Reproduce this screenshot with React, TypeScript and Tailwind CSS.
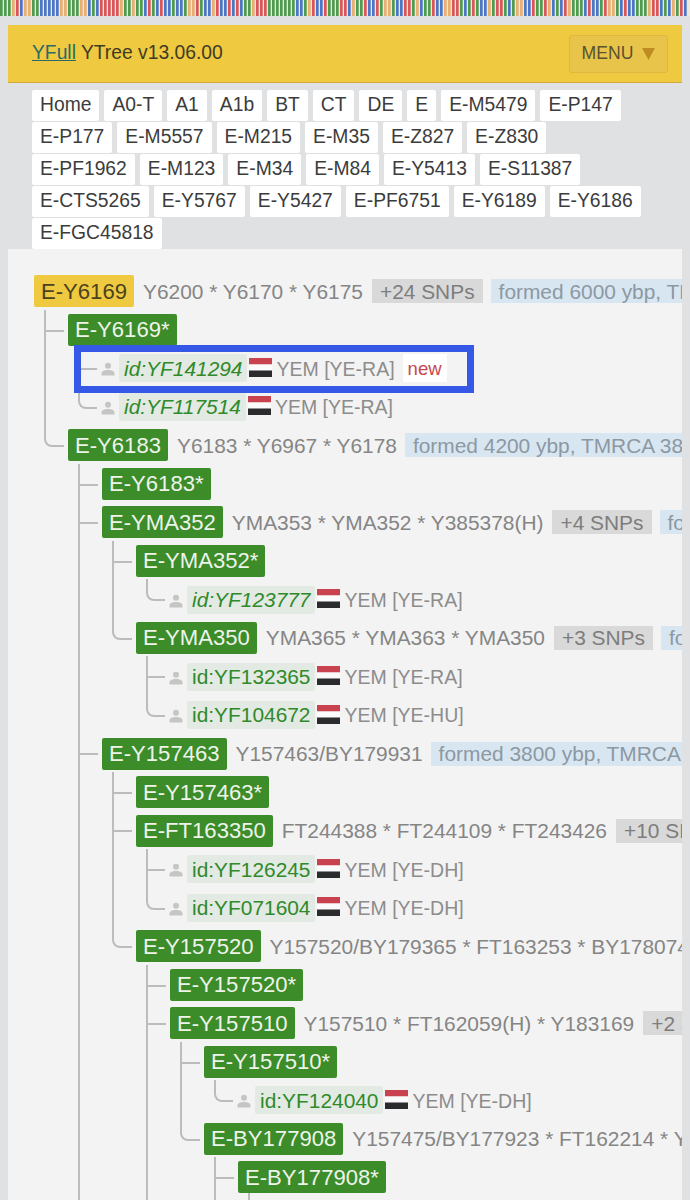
import { ReactNode } from "react";

type TreeNode = {
  name: string;
  snps?: string;
  extra?: string;
  formed?: string;
  root?: boolean;
  open?: boolean; // more siblings follow below the fold
  tail?: boolean; // children start below the fold
  children?: TreeNode[];
  id?: string;
  flagText?: string;
  italic?: boolean;
  isNew?: boolean;
  marked?: boolean;
};

const navItems = [
  "Home", "A0-T", "A1", "A1b", "BT", "CT", "DE", "E", "E-M5479", "E-P147",
  "E-P177", "E-M5557", "E-M215", "E-M35", "E-Z827", "E-Z830",
  "E-PF1962", "E-M123", "E-M34", "E-M84", "E-Y5413", "E-S11387",
  "E-CTS5265", "E-Y5767", "E-Y5427", "E-PF6751", "E-Y6189", "E-Y6186",
  "E-FGC45818",
];

const leaf = (id: string, region: string, italic = false): TreeNode => ({
  name: "",
  id,
  flagText: `YEM [${region}]`,
  italic,
});

const tree: TreeNode = {
  name: "E-Y6169",
  root: true,
  snps: "Y6200 * Y6170 * Y6175",
  extra: "+24 SNPs",
  formed: "formed 6000 ybp, TMRCA 4200 ybp",
  children: [
    {
      name: "E-Y6169*",
      children: [
        { ...leaf("YF141294", "YE-RA", true), isNew: true, marked: true },
        leaf("YF117514", "YE-RA", true),
      ],
    },
    {
      name: "E-Y6183",
      snps: "Y6183 * Y6967 * Y6178",
      formed: "formed 4200 ybp, TMRCA 3800 ybp",
      children: [
        { name: "E-Y6183*" },
        {
          name: "E-YMA352",
          snps: "YMA353 * YMA352 * Y385378(H)",
          extra: "+4 SNPs",
          formed: "formed 3800 ybp",
          children: [
            { name: "E-YMA352*", children: [leaf("YF123777", "YE-RA", true)] },
            {
              name: "E-YMA350",
              snps: "YMA365 * YMA363 * YMA350",
              extra: "+3 SNPs",
              formed: "formed 3800 ybp",
              children: [leaf("YF132365", "YE-RA"), leaf("YF104672", "YE-HU")],
            },
          ],
        },
        {
          name: "E-Y157463",
          open: true,
          snps: "Y157463/BY179931",
          formed: "formed 3800 ybp, TMRCA 3000 ybp",
          children: [
            { name: "E-Y157463*" },
            {
              name: "E-FT163350",
              snps: "FT244388 * FT244109 * FT243426",
              extra: "+10 SNPs",
              children: [leaf("YF126245", "YE-DH"), leaf("YF071604", "YE-DH")],
            },
            {
              name: "E-Y157520",
              snps: "Y157520/BY179365 * FT163253 * BY178074",
              children: [
                { name: "E-Y157520*" },
                {
                  name: "E-Y157510",
                  open: true,
                  snps: "Y157510 * FT162059(H) * Y183169",
                  extra: "+2 SNPs",
                  children: [
                    { name: "E-Y157510*", children: [leaf("YF124040", "YE-DH")] },
                    {
                      name: "E-BY177908",
                      snps: "Y157475/BY177923 * FT162214 * Y157480",
                      children: [{ name: "E-BY177908*", open: true, tail: true }],
                    },
                  ],
                },
              ],
            },
          ],
        },
      ],
    },
  ],
};

const stripeSeq =
  "gggorbooggbbbbbooggg oobgbrrrr".replace(" ", "") +
  "rogg oggbrgbrbbgbbgoorgbborbbr".replace(" ", "") +
  "brbggorrrgggggggbbgorbbrgggrrb" +
  "oggrbbrgoogbbrrgobggrbboorrgbg" +
  "rgbbogrrgbgoobbrggrobgbrogggbr" +
  "bbgroogbrbbgggorrbgbogrb";

const stripeColors: Record<string, string> = {
  g: "#4f9b50",
  r: "#d9575a",
  b: "#4c77c6",
  o: "#e8ae72",
};

function StripeBand() {
  return (
    <svg width="690" height="16" className="block bg-[#efe9dc]">
      {stripeSeq.split("").map((c, i) => (
        <rect key={i} x={i * 4} y="0" width="2.7" height="16" fill={stripeColors[c]} />
      ))}
    </svg>
  );
}

function PersonIcon() {
  return (
    <svg width="14" height="14" viewBox="0 0 14 14" className="shrink-0" fill="#c4c6c4">
      <circle cx="7" cy="3.8" r="3" />
      <path d="M0.5 13.5 V11 C0.5 9.5 3 8.4 5 8 H9 C11 8.4 13.5 9.5 13.5 11 V13.5 Z" />
    </svg>
  );
}

function YemenFlag() {
  return (
    <svg width="23" height="19" viewBox="0 0 23 19" className="shrink-0">
      <rect width="23" height="6.5" fill="#c8434f" />
      <rect y="6.5" width="23" height="6" fill="#fbfbfb" />
      <rect y="12.5" width="23" height="6.5" fill="#2b2b2e" />
    </svg>
  );
}

function Row({ children }: { children: ReactNode }) {
  return <div className="flex h-[38.54px] items-center whitespace-nowrap">{children}</div>;
}

function LeafRow({ node }: { node: TreeNode }) {
  return (
    <Row>
      <span className="-ml-[1px] mr-[4px] mt-[2px] flex"><PersonIcon /></span>
      <span
        className={`flex h-[28px] items-center rounded-[2px] bg-[#e3e9e3] px-[5px] text-[20.9px] text-[#2f8a2a] ${
          node.italic ? "italic" : ""
        }`}
      >
        id:{node.id}
      </span>
      <span className="-mt-[2px] ml-[2px] mr-[4px] flex"><YemenFlag /></span>
      <span className="pt-[2px] text-[19.5px] text-[#8c8c8c]">{node.flagText}</span>
      {node.isNew && (
        <span className="ml-[8px] flex h-[28px] items-center bg-white px-[5px] pt-[2px] text-[18.5px] text-[#c9484f]">
          new
        </span>
      )}
    </Row>
  );
}

function BranchRow({ node }: { node: TreeNode }) {
  return (
    <Row>
      <span
        className={`flex h-[32px] items-center rounded-[2px] px-[7px] text-[22.1px] ${
          node.root ? "bg-[#efc93f] text-[#4a4220]" : "bg-[#3c8c2a] text-[#eef4ea]"
        }`}
      >
        {node.name}
      </span>
      {node.snps && <span className="ml-[9px] text-[20.9px] text-[#858585]">{node.snps}</span>}
      {node.extra && (
        <span className="ml-[9px] flex h-[24px] items-center bg-[#d9d9d9] px-[8px] text-[20.9px] text-[#7d7d7d]">
          {node.extra}
        </span>
      )}
      {node.formed && (
        <span className="ml-[8px] flex h-[24px] items-center bg-[#d8e6f1] px-[8px] text-[20.9px] text-[#8c98a2]">
          {node.formed}
        </span>
      )}
    </Row>
  );
}

function TreeItem({ node, last }: { node: TreeNode; last: boolean }) {
  const kids = node.children ?? [];
  const isLeaf = !!node.id;
  const width = isLeaf ? "w-[19px]" : "w-[20px]";
  return (
    <li className={`relative ${node.root ? "" : "pl-[34px]"}`}>
      {!node.root &&
        (last && !node.open ? (
          <span
            className={`absolute left-[10px] top-[-1px] h-[22px] ${width} rounded-bl-[8px] border-b-2 border-l-2 border-[#bcbcbc]`}
          />
        ) : (
          <>
            <span
              className={`absolute left-[10px] top-[-1px] w-[2px] bg-[#bcbcbc] ${
                node.open ? "h-[1400px]" : "bottom-0"
              }`}
            />
            <span className={`absolute left-[10px] top-[19px] h-[2px] ${width} bg-[#bcbcbc]`} />
          </>
        ))}
      {node.tail && <span className="absolute left-[44px] top-[35px] h-[40px] w-[2px] bg-[#bcbcbc]" />}
      {isLeaf ? <LeafRow node={node} /> : <BranchRow node={node} />}
      {node.marked && (
        <span className="pointer-events-none absolute left-[6px] top-[-4px] z-10 h-[48px] w-[400px] border-[7px] border-[#3558e6]" />
      )}
      {kids.length > 0 && (
        <ul>
          {kids.map((k, i) => (
            <TreeItem key={k.name + (k.id ?? "")} node={k} last={i === kids.length - 1} />
          ))}
        </ul>
      )}
    </li>
  );
}

export default function App() {
  return (
    <div className="h-[1200px] w-[690px] overflow-hidden bg-[#e0e1e3] font-['Liberation_Sans',Arial,sans-serif]">
      <StripeBand />

      <header className="mx-[8px] mt-[9px] flex h-[58px] items-center justify-between border-b border-[#d2ab3a] bg-[#efc93f] pl-[24px] pr-[14px]">
        <div className="text-[19.3px] text-[#3f3c24]">
          <a className="text-[#2b6b66] underline">YFull</a> YTree v13.06.00
        </div>
        <button className="flex h-[38px] w-[99px] items-center justify-center gap-[9px] rounded-[3px] border border-[#dfb63f] bg-[#e9c44a] text-[17.6px] text-[#5a5230]">
          MENU
          <svg width="13" height="13" viewBox="0 0 13 13" fill="#bf8c22">
            <path d="M0 1 H13 L6.5 13 Z" />
          </svg>
        </button>
      </header>

      <nav className="ml-[32px] mt-[7px] flex w-[615px] flex-wrap gap-x-[5px] gap-y-[1px]">
        {navItems.map((item) => (
          <a
            key={item}
            className="flex h-[31px] items-center rounded-[2px] bg-white px-[8px] text-[19.3px] text-[#3c3c3c]"
          >
            {item}
          </a>
        ))}
      </nav>

      <main className="mx-[8px] h-[960px] overflow-hidden bg-[#f3f3f3] pl-[26px] pt-[23px]">
        <ul>
          <TreeItem node={tree} last />
        </ul>
      </main>
    </div>
  );
}
